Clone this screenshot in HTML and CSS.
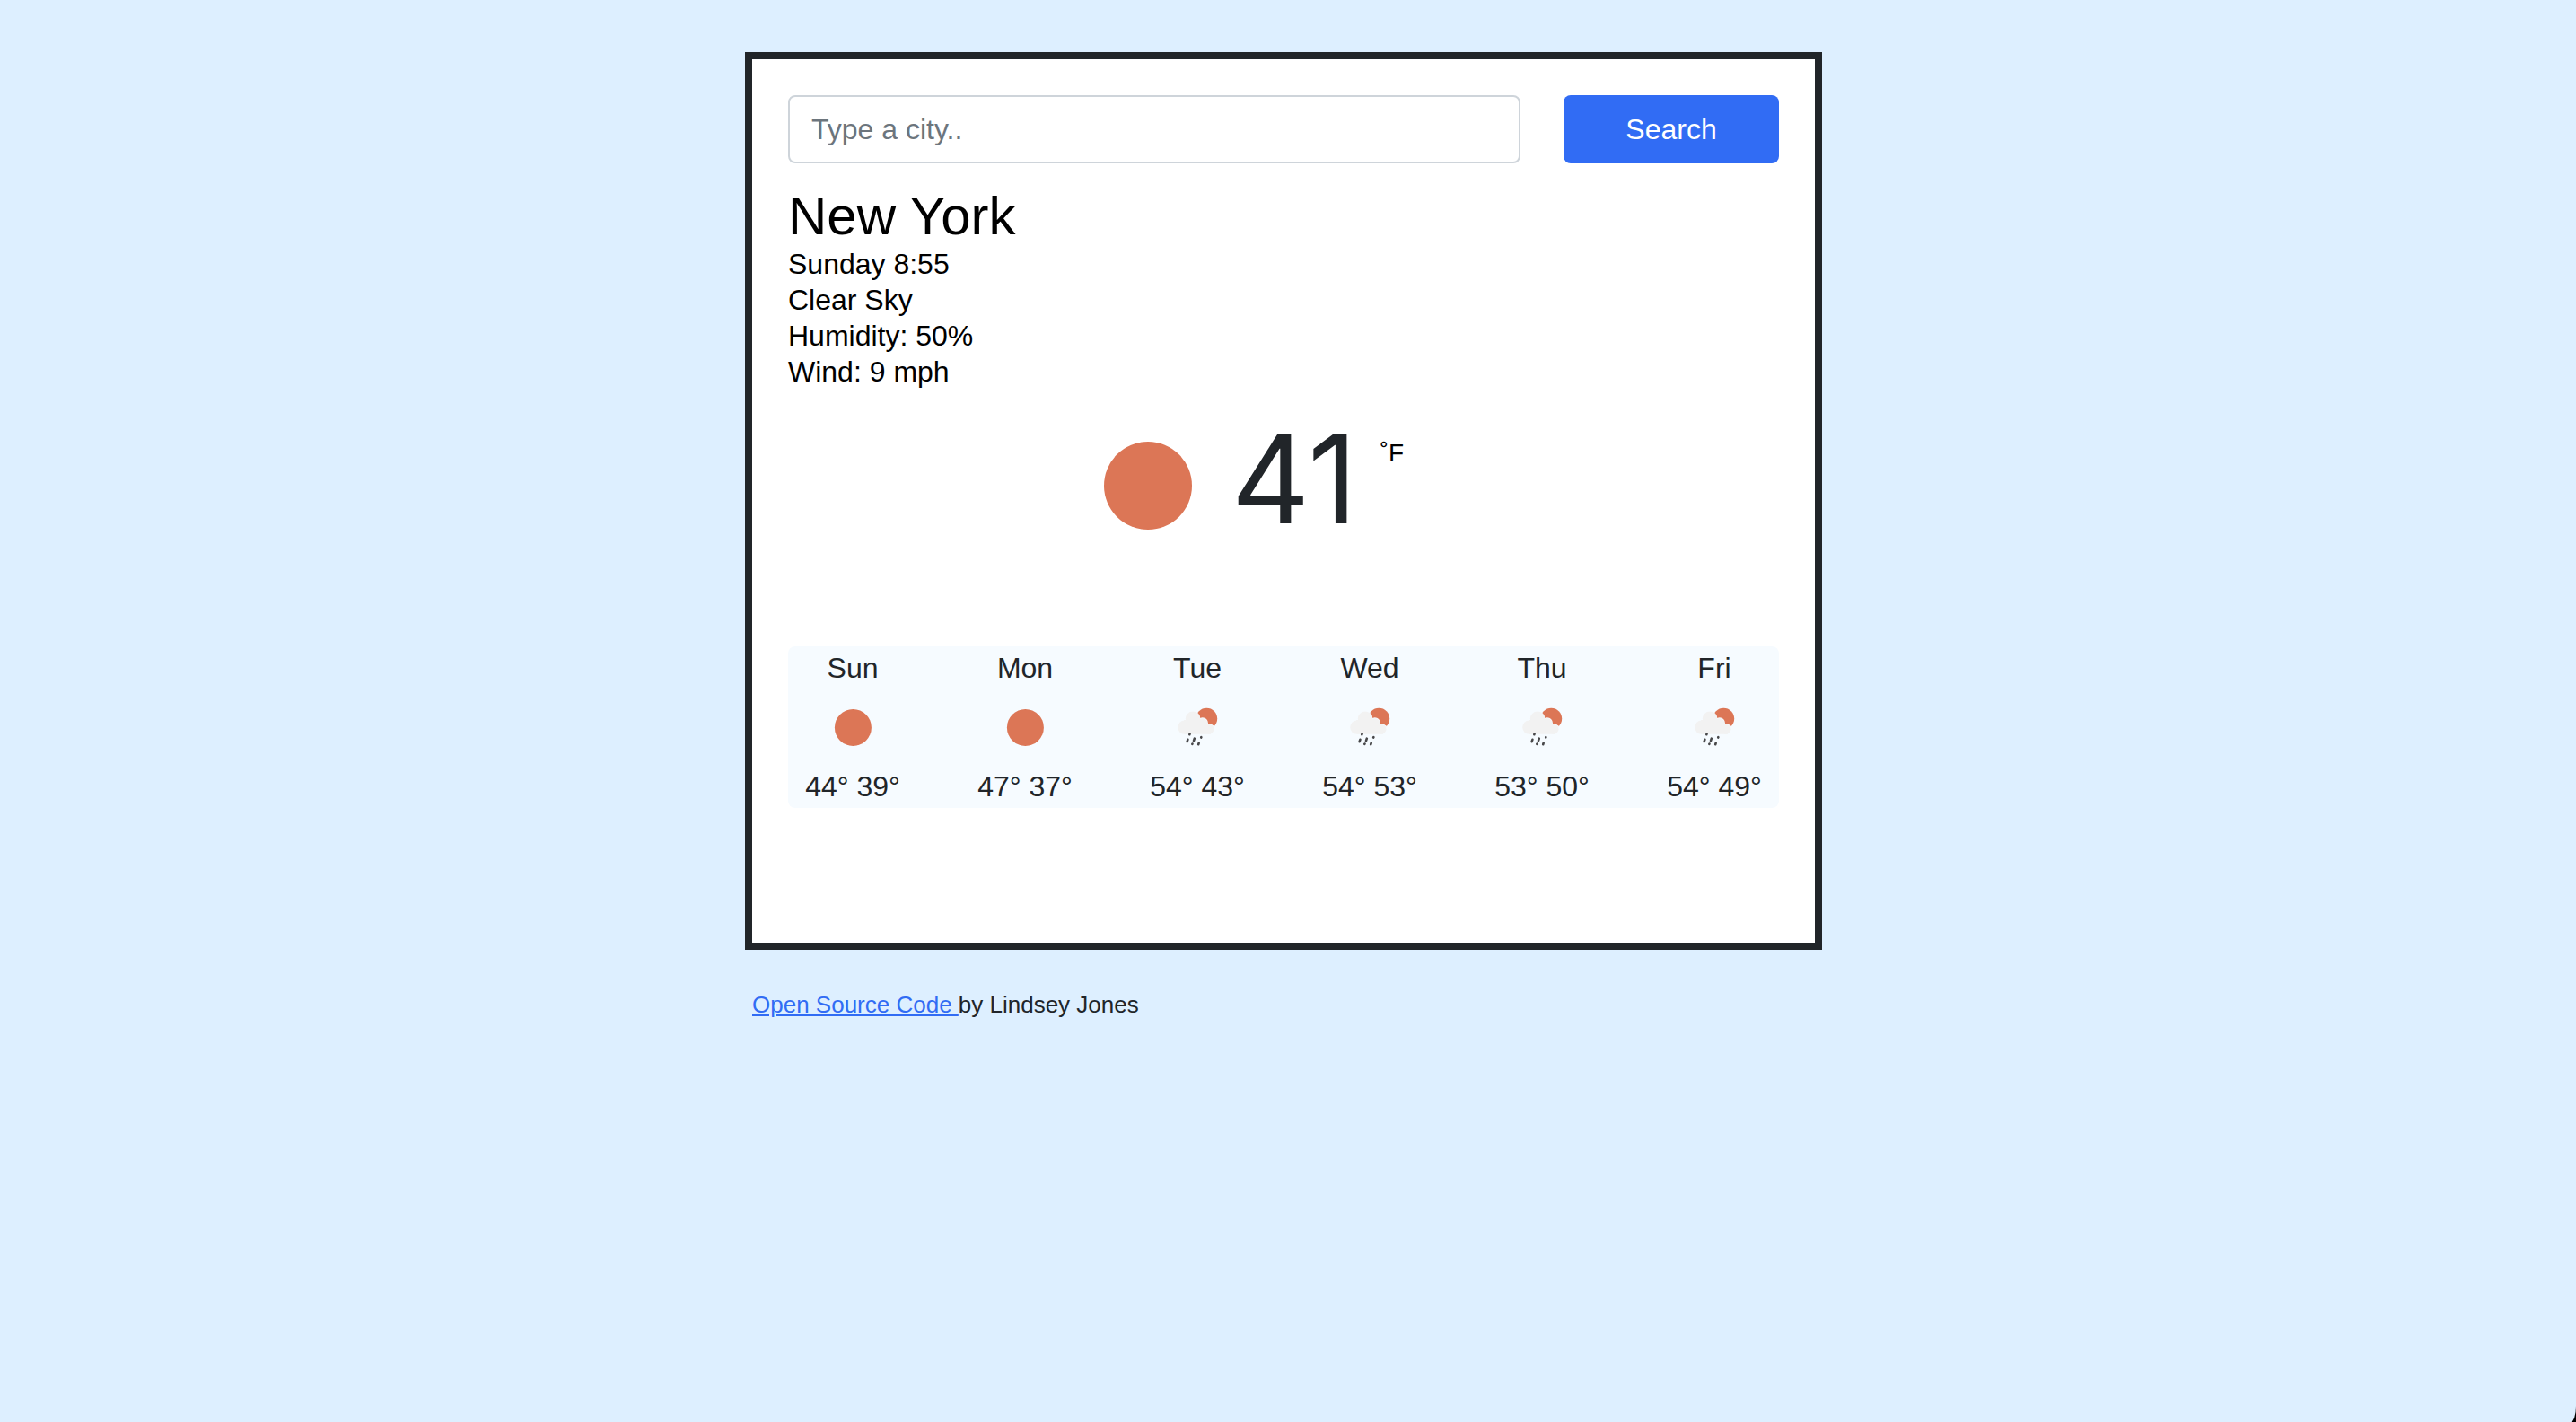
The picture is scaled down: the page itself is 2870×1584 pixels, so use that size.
FILE: index.html
```html
<!DOCTYPE html>
<html lang="en">
<head>
<meta charset="utf-8">
<title>Weather</title>
<link rel="stylesheet" href="styles.css">
</head>
<body>
<svg class="sprite" aria-hidden="true">
  <symbol id="sun" viewBox="0 0 84 84"><circle cx="42.4" cy="42.4" r="20.5" fill="#dc7656"/></symbol>
  <symbol id="rain" viewBox="0 0 84 84">
    <circle cx="52.3" cy="32.6" r="11.9" fill="#dc7656"/>
    <g fill="#f6fbff">
      <circle cx="37" cy="32.7" r="8.4"/>
      <circle cx="47.8" cy="37.4" r="6.1"/>
      <circle cx="55.2" cy="45" r="6.8"/>
    </g>
    <g fill="#f2f2f2">
      <circle cx="27.8" cy="42.1" r="7.6"/>
      <circle cx="37" cy="32.7" r="8.2"/>
      <circle cx="47.8" cy="37.5" r="5.4"/>
      <circle cx="55" cy="44.2" r="5.5"/>
      <path d="M27 34h24l6 8v7.7H27.8z"/>
    </g>
    <path d="M33.6 49.4l-.3.8M31.4 55.8l-.8 2.4M38.8 54.7l-.8 2.4M46.4 53.1l-.2.5M36.5 60.5l-.2.4M43.7 59.8l-.5 1.4" stroke="#48484a" stroke-width="2.6" stroke-linecap="round" fill="none"/>
  </symbol>
</svg>
<div class="page">
  <main class="card">
    <form class="search">
      <input class="search-input" type="text" placeholder="Type a city.." aria-label="City">
      <button class="search-button" type="button">Search</button>
    </form>
    <h1 class="city">New York</h1>
    <ul class="details">
      <li>Sunday 8:55</li>
      <li>Clear Sky</li>
      <li>Humidity: 50%</li>
      <li>Wind: 9 mph</li>
    </ul>
    <div class="current">
      <svg class="current-icon" viewBox="0 0 98 98" role="img" aria-label="Clear sky"><circle cx="49" cy="49" r="49" fill="#dc7656"/></svg>
      <strong class="temperature">41</strong>
      <span class="unit">˚F</span>
    </div>
    <section class="forecast">
      <div class="days">
        <div class="day"><span>Sun</span><svg class="icon"><use href="#sun"/></svg><span>44° 39°</span></div>
        <div class="day"><span>Mon</span><svg class="icon"><use href="#sun"/></svg><span>47° 37°</span></div>
        <div class="day"><span>Tue</span><svg class="icon"><use href="#rain"/></svg><span>54° 43°</span></div>
        <div class="day"><span>Wed</span><svg class="icon"><use href="#rain"/></svg><span>54° 53°</span></div>
        <div class="day"><span>Thu</span><svg class="icon"><use href="#rain"/></svg><span>53° 50°</span></div>
        <div class="day"><span>Fri</span><svg class="icon"><use href="#rain"/></svg><span>54° 49°</span></div>
      </div>
    </section>
  </main>
  <footer class="credit"><a href="#">Open Source Code </a>by Lindsey Jones</footer>
</div>
</body>
</html>
```
FILE: styles.css
```css
* { box-sizing: border-box; }

html { background: #000; }

body {
  margin: 0;
  min-height: 100vh;
  padding: 58px 10px 40px 0;
  background: #ddefff;
  border-bottom-right-radius: 6px 18px;
  color: #212529;
  font-family: "Liberation Sans", Arial, sans-serif;
  font-size: 32px;
  line-height: 48px;
}

.sprite { display: none; }

.page {
  max-width: 1200px;
  margin: 0 auto;
}

.card {
  padding: 40px 40px 150px;
  background: #fff;
  border: 8px solid #212529;
}

.search {
  display: flex;
  gap: 48px;
}

.search-input,
.search-button {
  height: 76px;
  border-radius: 8px;
  font: inherit;
}

.search-input {
  flex: 1;
  min-width: 0;
  padding: 12px 24px;
  border: 2px solid #ced4da;
  background: #fff;
  color: #212529;
}

.search-input::placeholder {
  color: #6c757d;
  opacity: 1;
}

.search-button {
  width: 240px;
  padding: 0;
  border: 0;
  background: #316cf4;
  color: #fff;
}

.city {
  margin: 26px 0 0;
  color: #000;
  font-size: 60px;
  font-weight: 400;
  line-height: 66px;
}

.details {
  margin: 0;
  padding: 0;
  color: #000;
  line-height: 40px;
  list-style: none;
}

.current {
  display: flex;
  justify-content: center;
  margin: 16px 0 102px;
  padding-right: 66px;
}

.current-icon {
  width: 98px;
  height: 98px;
  margin: 42px 44px 0 0;
}

.temperature {
  min-width: 156px;
  font-family: Inter, "Liberation Sans", sans-serif;
  font-size: 136px;
  font-weight: 400;
  line-height: 168px;
}

.unit {
  margin: 34px 0 0 10px;
  color: #000;
  font-size: 28px;
  line-height: 42px;
}

.forecast {
  background: #f6fbff;
  border-radius: 8px;
}

.days {
  display: grid;
  grid-template-columns: repeat(6, 1fr);
  margin: 0 -24px;
}

.day {
  display: flex;
  flex-direction: column;
  align-items: center;
}

.icon {
  width: 84px;
  height: 84px;
}

.credit {
  padding: 37px 8px;
  font-size: 26px;
}

.credit a { color: #316cf4; }
```
